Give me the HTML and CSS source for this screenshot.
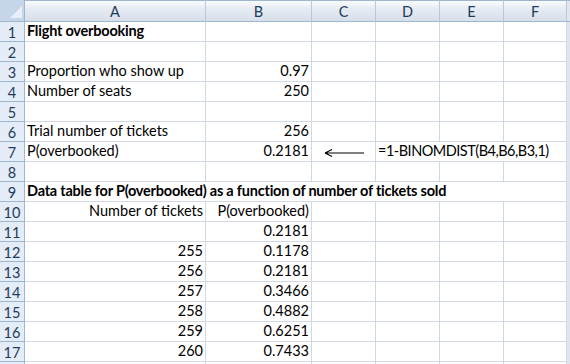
FILE: index.html
```html
<!DOCTYPE html>
<html lang="en">
<head>
    <meta charset="UTF-8">
    <meta name="viewport" content="width=device-width, initial-scale=1.0">
    <title>Flight overbooking</title>
    <link rel="stylesheet" href="styles.css">
</head>
<body>
    <div class="sheet">
        <div class="corner"><svg width="12" height="12" viewBox="0 0 12 12"><polygon points="12,0 12,12 0,12" fill="#e9eff8"/></svg></div>
        <div class="hd">A</div><div class="hd">B</div><div class="hd">C</div><div class="hd">D</div><div class="hd">E</div><div class="hd">F</div><div class="hd eg"></div>

        <div class="rh">1</div><div class="c b">Flight overbooking</div><div class="c"></div><div class="c"></div><div class="c"></div><div class="c"></div><div class="c"></div><div class="eg"></div>
        <div class="rh">2</div><div class="c"></div><div class="c"></div><div class="c"></div><div class="c"></div><div class="c"></div><div class="c"></div><div class="eg"></div>
        <div class="rh">3</div><div class="c">Proportion who show up</div><div class="c n">0.97</div><div class="c"></div><div class="c"></div><div class="c"></div><div class="c"></div><div class="eg"></div>
        <div class="rh">4</div><div class="c">Number of seats</div><div class="c n">250</div><div class="c"></div><div class="c"></div><div class="c"></div><div class="c"></div><div class="eg"></div>
        <div class="rh">5</div><div class="c"></div><div class="c"></div><div class="c"></div><div class="c"></div><div class="c"></div><div class="c"></div><div class="eg"></div>
        <div class="rh">6</div><div class="c">Trial number of tickets</div><div class="c n">256</div><div class="c"></div><div class="c"></div><div class="c"></div><div class="c"></div><div class="eg"></div>
        <div class="rh">7</div><div class="c">P(overbooked)</div><div class="c n">0.2181</div>
        <div class="c arrow"><svg width="42" height="12" viewBox="0 0 42 12"><path d="M1 6H40M1 6L8 2.5M1 6L8 9.5" stroke="#000" stroke-width="1.1" fill="none"/></svg></div>
        <div class="c span3 formula">=1-BINOMDIST(B4,B6,B3,1)</div><div class="eg"></div>
        <div class="rh">8</div><div class="c"></div><div class="c"></div><div class="c"></div><div class="c"></div><div class="c"></div><div class="c"></div><div class="eg"></div>
        <div class="rh">9</div><div class="c b span6">Data table for P(overbooked) as a function of number of tickets sold</div><div class="eg"></div>
        <div class="rh">10</div><div class="c n">Number of tickets</div><div class="c n">P(overbooked)</div><div class="c"></div><div class="c"></div><div class="c"></div><div class="c"></div><div class="eg"></div>
        <div class="rh">11</div><div class="c"></div><div class="c n">0.2181</div><div class="c"></div><div class="c"></div><div class="c"></div><div class="c"></div><div class="eg"></div>
        <div class="rh">12</div><div class="c n">255</div><div class="c n">0.1178</div><div class="c"></div><div class="c"></div><div class="c"></div><div class="c"></div><div class="eg"></div>
        <div class="rh">13</div><div class="c n">256</div><div class="c n">0.2181</div><div class="c"></div><div class="c"></div><div class="c"></div><div class="c"></div><div class="eg"></div>
        <div class="rh">14</div><div class="c n">257</div><div class="c n">0.3466</div><div class="c"></div><div class="c"></div><div class="c"></div><div class="c"></div><div class="eg"></div>
        <div class="rh">15</div><div class="c n">258</div><div class="c n">0.4882</div><div class="c"></div><div class="c"></div><div class="c"></div><div class="c"></div><div class="eg"></div>
        <div class="rh">16</div><div class="c n">259</div><div class="c n">0.6251</div><div class="c"></div><div class="c"></div><div class="c"></div><div class="c"></div><div class="eg"></div>
        <div class="rh">17</div><div class="c n">260</div><div class="c n">0.7433</div><div class="c"></div><div class="c"></div><div class="c"></div><div class="c"></div><div class="eg"></div>
        <div class="rh"></div><div class="c"></div><div class="c"></div><div class="c"></div><div class="c"></div><div class="c"></div><div class="c"></div><div class="eg"></div>
    </div>
</body>
</html>
```

FILE: styles.css
```css
html, body {
    margin: 0;
    height: 100%;
    overflow: hidden;
    background: #fff;
}
.sheet {
    display: grid;
    grid-template-columns: 25px 181px 106px 64px 64px 64px 63px 3px;
    grid-template-rows: 22px repeat(17, 20px) 20px;
    font-family: Lato, "Open Sans", sans-serif;
    font-size: 14.5px;
    color: #000;
}
.sheet > div {
    box-sizing: border-box;
    overflow: visible;
    white-space: nowrap;
}
.corner {
    background: #c5d5ea;
    border-right: 1px solid #9eb6ce;
    border-bottom: 1px solid #9eb6ce;
    display: flex;
    align-items: flex-end;
    justify-content: flex-end;
    padding: 0 2px 3px 0;
}
.corner svg {
    display: block;
}
.hd {
    background: linear-gradient(#f9fbfd, #e4eaf2 45%, #d7dfea);
    border-top: 1px solid #9eb6ce;
    border-right: 1px solid #b9c9da;
    border-bottom: 1px solid #9eb6ce;
    display: flex;
    align-items: center;
    justify-content: center;
    color: #233c5a;
    padding-top: 1px;
}
.hd.eg {
    border-right: none;
}
.rh {
    background: #e4ecf7;
    border-right: 1px solid #9eb6ce;
    border-bottom: 1px solid #9eb6ce;
    color: #233c5a;
    display: flex;
    align-items: center;
    justify-content: center;
    padding-top: 1px;
}
.c {
    border-right: 1px solid #d0d7e5;
    border-bottom: 1px solid #d0d7e5;
    display: flex;
    align-items: flex-end;
    padding: 0 2px 2px 2px;
    line-height: 16px;
}
.c.n {
    justify-content: flex-end;
}
.c.b {
    font-weight: bold;
    letter-spacing: -0.22px;
}
.formula {
    letter-spacing: -0.5px;
}
.span3 {
    grid-column: span 3;
}
.span6 {
    grid-column: span 6;
}
.arrow {
    align-items: center;
    padding: 2px 0 0 12px;
}
.arrow svg {
    display: block;
}
.eg {
    background: #dfe6ef;
}
```
